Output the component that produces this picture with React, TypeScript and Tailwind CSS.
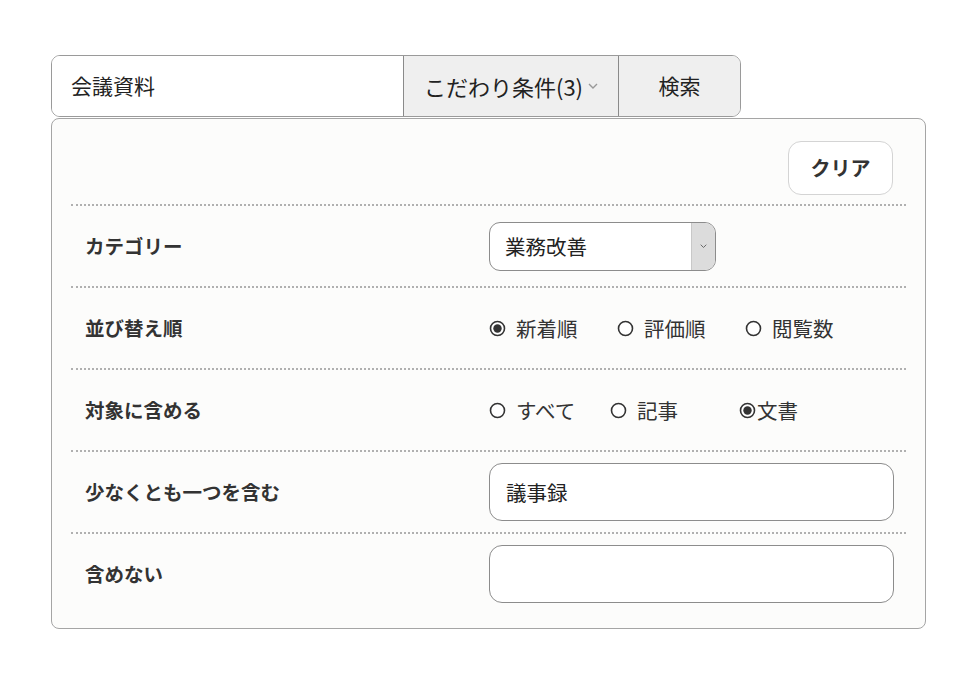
import React from "react";

const FONT = { fontFamily: '"Noto Sans CJK JP", "Noto Sans", sans-serif' };

function Radio({ checked }: { checked?: boolean }) {
  return (
    <svg width="17" height="17" viewBox="0 0 17 17" className="shrink-0">
      <circle cx="8.5" cy="8.5" r="7" fill="white" stroke="#333" strokeWidth="1.6" />
      {checked && <circle cx="8.5" cy="8.5" r="4.2" fill="#333" />}
    </svg>
  );
}

function Option({ label, checked, width, gap = "gap-[10px]" }: { label: string; checked?: boolean; width: string; gap?: string }) {
  return (
    <label className={`flex items-center ${gap} ${width}`}>
      <Radio checked={checked} />
      <span className="text-[20.5px] text-[#333]">{label}</span>
    </label>
  );
}

function Chevron({ size = 10, color = "#999" }: { size?: number; color?: string }) {
  return (
    <svg width={size} height={size * 0.6} viewBox="0 0 10 6">
      <path d="M1 1 L5 5 L9 1" fill="none" stroke={color} strokeWidth="1.4" />
    </svg>
  );
}

function Row({ label, children }: { label: string; children: React.ReactNode }) {
  return (
    <div className="flex h-[82px] items-center border-t-2 border-dotted border-[#b0b0b0]">
      <div className="w-[418px] pl-[14px] text-[19.5px] font-bold text-[#333]">{label}</div>
      <div className="flex items-center">{children}</div>
    </div>
  );
}

export default function App() {
  return (
    <div className="min-h-[684px] bg-white pt-[55px] pl-[51px]" style={FONT}>
      <div className="w-[875px]">
        {/* search bar */}
        <div className="flex h-[62px] w-[690px] overflow-hidden rounded-[9px] border border-[#9a9a9a]">
          <div className="flex w-[351px] items-center bg-white pl-[19px] text-[21px] text-[#222]">会議資料</div>
          <button className="flex w-[215px] items-center justify-center gap-[5px] border-l border-[#8a8a8a] bg-[#efefef] text-[22px] text-[#222]">
            <span>こだわり条件(3)</span>
            <Chevron size={10} color="#999" />
          </button>
          <button className="flex flex-1 items-center justify-center border-l border-[#8a8a8a] bg-[#efefef] text-[21px] text-[#222]">検索</button>
        </div>

        {/* filter panel */}
        <div className="mt-[1px] rounded-[8px] border border-[#a5a5a5] bg-[#fcfcfb] px-[19px] pb-[14px]">
          <div className="flex justify-end pt-[22px] pb-[9px] pr-[13px]">
            <button className="flex h-[54px] w-[105px] items-center justify-center rounded-[13px] border border-[#d4d4d4] bg-white text-[20px] font-bold text-[#333]">
              クリア
            </button>
          </div>

          <Row label="カテゴリー">
            <div className="flex h-[49px] w-[227px] overflow-hidden rounded-[11px] border border-[#8c8c8c] bg-white">
              <div className="flex flex-1 items-center pl-[15px] text-[20.5px] text-[#222]">業務改善</div>
              <div className="flex w-[24px] items-center justify-center border-l border-[#c8c8c8] bg-[#dcdcdc]">
                <Chevron size={7} color="#666" />
              </div>
            </div>
          </Row>

          <Row label="並び替え順">
            <Option label="新着順" checked width="w-[128px]" />
            <Option label="評価順" width="w-[128px]" />
            <Option label="閲覧数" width="w-[128px]" />
          </Row>

          <Row label="対象に含める">
            <Option label="すべて" width="w-[121px]" />
            <Option label="記事" width="w-[129px]" />
            <Option label="文書" checked width="w-[100px]" gap="gap-[1px]" />
          </Row>

          <Row label="少なくとも一つを含む">
            <div className="flex h-[58px] w-[405px] items-center rounded-[13px] border border-[#8c8c8c] bg-white pl-[16px] text-[20.5px] text-[#222]">
              議事録
            </div>
          </Row>

          <Row label="含めない">
            <div className="h-[58px] w-[405px] rounded-[13px] border border-[#8c8c8c] bg-white" />
          </Row>
        </div>
      </div>
    </div>
  );
}
